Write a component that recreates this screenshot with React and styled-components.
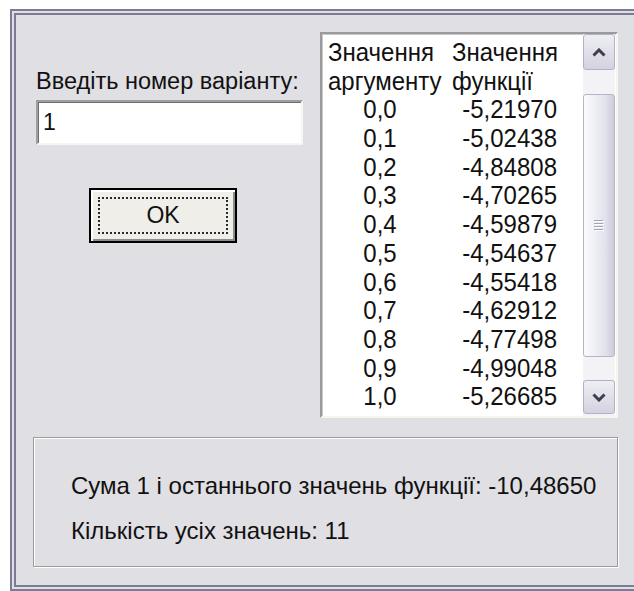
import React from 'react';
import styled, { createGlobalStyle } from 'styled-components';

const GlobalStyle = createGlobalStyle`
  html, body {
    margin: 0;
    padding: 0;
    background: #ffffff;
    overflow: hidden;
  }
  body {
    font-family: "Liberation Sans", Arial, sans-serif;
    color: #111;
  }
`;

const Page = styled.div`
  padding: 9px 0 0 10px;
`;

const Window = styled.div`
  box-sizing: border-box;
  height: 582px;
  border: 6px double #7c7b98;
  border-right: 0;
  background: #e0dfe3;
  padding-left: 17px;
`;

const TopRow = styled.div`
  display: flex;
  padding-top: 17px;
`;

const LeftColumn = styled.div`
  box-sizing: border-box;
  width: 287px;
  padding: 36px 0 0 3px;
  display: flex;
  flex-direction: column;
  align-items: flex-start;
`;

const Label = styled.div`
  font-size: 23.5px;
  line-height: 26px;
  white-space: nowrap;
`;

const Input = styled.div`
  box-sizing: border-box;
  margin-top: 6px;
  width: 267px;
  height: 45px;
  border: 2px solid;
  border-color: #9e9e9e #f6f5f0 #f6f5f0 #9e9e9e;
  box-shadow: inset 1px 1px 0 #6e6e6e;
  background: #fff;
  padding-left: 5px;
  display: flex;
  align-items: center;
  font-size: 23px;
`;

const Button = styled.div`
  box-sizing: border-box;
  margin: 43px 0 0 53px;
  width: 148px;
  height: 55px;
  border: 2px solid #000;
  background: #efeee9;
  box-shadow: inset 2px 2px 0 #ffffff, inset -2px -2px 0 #8d8d8d;
  padding: 7px;
  display: flex;
`;

const FocusRing = styled.div`
  flex: 1;
  border: 2px dotted #2a2a2a;
  display: flex;
  align-items: center;
  justify-content: center;
  font-size: 23px;
`;

const ListBox = styled.div`
  box-sizing: border-box;
  width: 298px;
  height: 386px;
  border: 2px solid;
  border-color: #9a9a9a #f6f5f0 #f6f5f0 #9a9a9a;
  box-shadow: inset 1px 1px 0 #c9c9c9;
  background: #fff;
  display: flex;
`;

const Rows = styled.div`
  flex: 1;
  padding: 4px 0 0 6px;
`;

const Row = styled.div`
  display: flex;
  gap: 20px;
  height: 28.7px;
  line-height: 28.7px;
  font-size: 24px;
`;

const Cell = styled.div`
  width: ${p => p.$w}px;
  text-align: ${p => p.$align || 'left'};
  white-space: nowrap;
  span {
    display: inline-block;
    transform: scaleY(1.1);
  }
`;

const Scrollbar = styled.div`
  width: 32px;
  margin-right: 1px;
  background: #f3f3f6;
  display: flex;
  flex-direction: column;
`;

const ArrowButton = styled.div`
  box-sizing: border-box;
  height: ${p => p.$h}px;
  border: 1px solid #b3b2c4;
  border-radius: 3px;
  background: linear-gradient(#eeeef4, #d3d2df);
  display: flex;
  align-items: center;
  justify-content: center;
`;

const Thumb = styled.div`
  box-sizing: border-box;
  margin-top: 24px;
  height: 263px;
  border: 1px solid #b6b5c7;
  border-radius: 3px;
  background: linear-gradient(to right, #fbfbfe, #e2e2ec 70%, #cdccda);
  display: flex;
  align-items: center;
  justify-content: center;
`;

const Spacer = styled.div`
  flex: ${p => p.$size ? `0 0 ${p.$size}px` : 1};
`;

const GroupBox = styled.div`
  box-sizing: border-box;
  margin-top: 19px;
  width: 585px;
  height: 130px;
  border: 1px solid #9c9c9c;
  box-shadow: inset 1px 1px 0 #fff, 1px 1px 0 #fff;
  padding: 34px 0 0 37px;
  display: flex;
  flex-direction: column;
  gap: 17px;
`;

const Info = styled.div`
  font-size: 24px;
  line-height: 28px;
  white-space: nowrap;
`;

const values = [
  ['0,0', '-5,21970'],
  ['0,1', '-5,02438'],
  ['0,2', '-4,84808'],
  ['0,3', '-4,70265'],
  ['0,4', '-4,59879'],
  ['0,5', '-4,54637'],
  ['0,6', '-4,55418'],
  ['0,7', '-4,62912'],
  ['0,8', '-4,77498'],
  ['0,9', '-4,99048'],
  ['1,0', '-5,26685'],
];

const Chevron = ({ up }) => (
  <svg width="14" height="9" viewBox="0 0 14 9">
    <polyline
      points={up ? '1.5,7.5 7,2 12.5,7.5' : '1.5,1.5 7,7 12.5,1.5'}
      fill="none"
      stroke="#3f3f4a"
      strokeWidth="3"
    />
  </svg>
);

const Grip = () => (
  <svg width="10" height="11" viewBox="0 0 10 11">
    {[0, 3, 6, 9].map(y => (
      <g key={y}>
        <rect x="0" y={y} width="9" height="1" fill="#a3a2b8" />
        <rect x="1" y={y + 1} width="9" height="1" fill="#ffffff" />
      </g>
    ))}
  </svg>
);

export default function App() {
  return (
    <Page>
      <GlobalStyle />
      <Window>
        <TopRow>
          <LeftColumn>
            <Label>Введіть номер варіанту:</Label>
            <Input>1</Input>
            <Button>
              <FocusRing>OK</FocusRing>
            </Button>
          </LeftColumn>
          <ListBox>
            <Rows>
              <Row>
                <Cell $w={104}><span>Значення</span></Cell>
                <Cell $w={105}><span>Значення</span></Cell>
              </Row>
              <Row>
                <Cell $w={104}><span>аргументу</span></Cell>
                <Cell $w={105}><span>функції</span></Cell>
              </Row>
              {values.map(([x, y]) => (
                <Row key={x}>
                  <Cell $w={104} $align="center"><span>{x}</span></Cell>
                  <Cell $w={105} $align="right"><span>{y}</span></Cell>
                </Row>
              ))}
            </Rows>
            <Scrollbar>
              <ArrowButton $h={36}><Chevron up /></ArrowButton>
              <Thumb><Grip /></Thumb>
              <Spacer />
              <ArrowButton $h={34}><Chevron /></ArrowButton>
              <Spacer $size={2} />
            </Scrollbar>
          </ListBox>
        </TopRow>
        <GroupBox>
          <Info>Сума 1 і останнього значень функції: -10,48650</Info>
          <Info>Кількість усіх значень: 11</Info>
        </GroupBox>
      </Window>
    </Page>
  );
}
